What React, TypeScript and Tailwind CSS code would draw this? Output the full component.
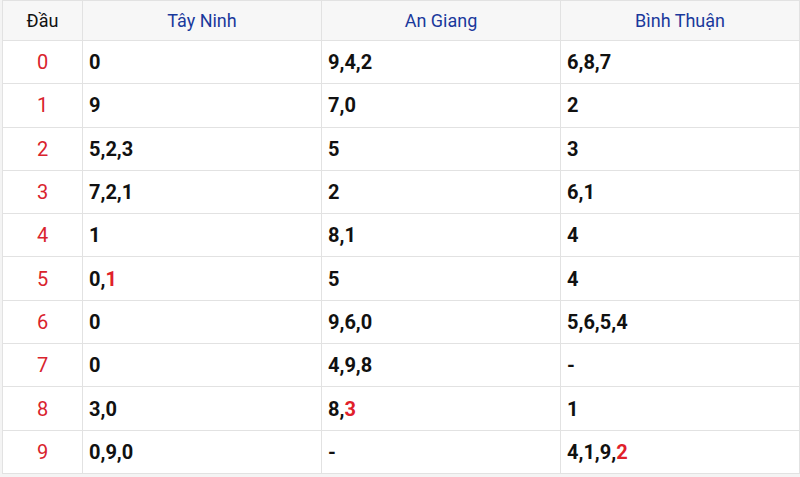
const rows: { d: string; cols: { v: string; red?: string }[] }[] = [
  { d: "0", cols: [{ v: "0" }, { v: "9,4,2" }, { v: "6,8,7" }] },
  { d: "1", cols: [{ v: "9" }, { v: "7,0" }, { v: "2" }] },
  { d: "2", cols: [{ v: "5,2,3" }, { v: "5" }, { v: "3" }] },
  { d: "3", cols: [{ v: "7,2,1" }, { v: "2" }, { v: "6,1" }] },
  { d: "4", cols: [{ v: "1" }, { v: "8,1" }, { v: "4" }] },
  { d: "5", cols: [{ v: "0,", red: "1" }, { v: "5" }, { v: "4" }] },
  { d: "6", cols: [{ v: "0" }, { v: "9,6,0" }, { v: "5,6,5,4" }] },
  { d: "7", cols: [{ v: "0" }, { v: "4,9,8" }, { v: "-" }] },
  { d: "8", cols: [{ v: "3,0" }, { v: "8,", red: "3" }, { v: "1" }] },
  { d: "9", cols: [{ v: "0,9,0" }, { v: "-" }, { v: "4,1,9,", red: "2" }] },
];

export default function App() {
  return (
    <div
      className="w-[800px] h-[477px] bg-[#f4f4f4] pl-[2px] overflow-hidden"
      style={{ fontFamily: "Roboto, 'Liberation Sans', sans-serif" }}
    >
      <table className="w-[797px] border-collapse table-fixed bg-white">
        <colgroup>
          <col className="w-[80px]" />
          <col className="w-[239px]" />
          <col className="w-[239px]" />
          <col className="w-[239px]" />
        </colgroup>
        <thead>
          <tr className="h-[40px] bg-[#f7f7f7]">
            <th className="border border-[#e2e2e2] font-normal text-[18px] text-[#111]">Đầu</th>
            <th className="border border-[#e2e2e2] font-normal text-[18px] text-[#1a399c]">Tây Ninh</th>
            <th className="border border-[#e2e2e2] font-normal text-[18px] text-[#1a399c]">An Giang</th>
            <th className="border border-[#e2e2e2] font-normal text-[18px] text-[#1a399c]">Bình Thuận</th>
          </tr>
        </thead>
        <tbody>
          {rows.map((r) => (
            <tr key={r.d} className="h-[43.3px]">
              <td className="border border-[#e2e2e2] text-center text-[20px] text-[#d9232d]">{r.d}</td>
              {r.cols.map((c, i) => (
                <td key={i} className="border border-[#e2e2e2] pl-[6px] text-[20px] font-bold text-[#111]">
                  {c.v}
                  {c.red && <span className="text-[#e0202a]">{c.red}</span>}
                </td>
              ))}
            </tr>
          ))}
        </tbody>
      </table>
    </div>
  );
}
